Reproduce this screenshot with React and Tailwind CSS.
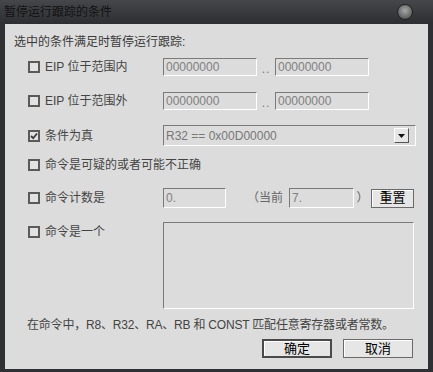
import React from 'react';

const font = { fontFamily: '"Liberation Sans", "Noto Sans CJK SC", sans-serif' };

function Check({ checked }) {
  return (
    <span className="w-[12px] h-[12px] border-2 border-[#5a5a5a] bg-[#e2e2e2] flex items-center justify-center shrink-0">
      {checked && (
        <svg width="8" height="8" viewBox="0 0 8 8">
          <path d="M1 4 L3.2 6.2 L7 1.5" stroke="#3a3a3a" strokeWidth="1.8" fill="none" />
        </svg>
      )}
    </span>
  );
}

function Field({ w, h = 18, children }) {
  return (
    <div
      className={`${w} border border-t-[#7a7a7a] border-l-[#7a7a7a] border-b-white border-r-white bg-[#dcdcdc] text-[12px] text-[#808080] pl-[2px] flex items-center shrink-0`}
      style={{ height: h }}
    >
      {children}
    </div>
  );
}

function Btn({ w, primary, children }) {
  return (
    <div className={`${w} h-[19px] ${primary ? 'border-2 border-[#4a4a4a]' : 'border border-[#6a6a6a]'} bg-[#e6e6e6] flex items-center justify-center text-[13px] text-black shadow-[inset_1px_1px_0_#ffffff]`}>
      {children}
    </div>
  );
}

function Row({ checked, label, children, className = '' }) {
  return (
    <div className={`flex items-center ${className}`}>
      <div className="w-[158px] flex items-center pl-[23px] gap-[5px] text-[12px] text-[#444]">
        <Check checked={checked} />
        <span className="whitespace-nowrap leading-[18px]">{label}</span>
      </div>
      {children}
    </div>
  );
}

function Dots() {
  return <span className="w-[18px] text-center text-[12px] text-[#777] self-end leading-[14px] tracking-[1px]">..</span>;
}

export default function App() {
  return (
    <div className="w-[433px] h-[372px] bg-[#2e3033] flex flex-col overflow-hidden" style={font}>
      <div className="h-[24px] bg-gradient-to-b from-[#45474a] to-[#2c2e31] flex items-center justify-between pl-[4px] pr-[20px]">
        <span className="text-[12px] text-[#121212] leading-none">暂停运行跟踪的条件</span>
        <span className="w-[16px] h-[16px] rounded-full border border-[#222] bg-[radial-gradient(circle_at_50%_40%,#a8a8a8,#6a6a6a_60%,#3a3a3a)]" />
      </div>
      <div className="mx-[5px] mb-[3px] flex-1 bg-[#dcdcdc] flex flex-col">
        <div className="pl-[9px] mt-[9px] h-[18px] leading-[18px] text-[12px] text-[#3a3a3a]">选中的条件满足时暂停运行跟踪:</div>

        <Row label="EIP 位于范围内" className="mt-[7px] h-[18px]">
          <Field w="w-[94px]">00000000</Field>
          <Dots />
          <Field w="w-[94px]">00000000</Field>
        </Row>

        <Row label="EIP 位于范围外" className="mt-[16px] h-[18px]">
          <Field w="w-[94px]">00000000</Field>
          <Dots />
          <Field w="w-[94px]">00000000</Field>
        </Row>

        <Row checked label="条件为真" className="mt-[15px] h-[21px]">
          <div className="w-[253px] h-[21px] border border-t-[#7a7a7a] border-l-[#7a7a7a] border-b-white border-r-white bg-[#dcdcdc] flex items-center justify-between pl-[2px] pr-[6px]">
            <span className="text-[12px] text-[#777]">R32 == 0x00D00000</span>
            <span className="w-[15px] h-[15px] bg-[#e6e6e6] border border-t-white border-l-white border-b-[#555] border-r-[#555] flex items-center justify-center">
              <svg width="7" height="4" viewBox="0 0 7 4"><path d="M0 0 H7 L3.5 4 Z" fill="#111" /></svg>
            </span>
          </div>
        </Row>

        <Row label="命令是可疑的或者可能不正确" className="mt-[10px] h-[18px]" />

        <Row label="命令计数是" className="mt-[14px] h-[20px]">
          <Field w="w-[63px]" h={20}>0.</Field>
          <span className="ml-[21px] w-[42px] text-[12px] text-[#666] whitespace-nowrap">（当前</span>
          <Field w="w-[65px]" h={20}>7.</Field>
          <span className="w-[17px] text-center text-[12px] text-[#666]">）</span>
          <Btn w="w-[43px]">重置</Btn>
        </Row>

        <div className="flex items-start mt-[14px]">
          <div className="w-[158px] h-[18px] flex items-center pl-[23px] gap-[5px] text-[12px] text-[#444] mt-[1px]">
            <Check />
            <span className="leading-[18px]">命令是一个</span>
          </div>
          <div className="w-[251px] h-[87px] border border-t-[#7a7a7a] border-l-[#7a7a7a] border-b-white border-r-white bg-[#dcdcdc]" />
        </div>

        <div className="pl-[22px] mt-[7px] h-[18px] leading-[18px] text-[12px] text-[#444] whitespace-nowrap tracking-[-0.2px]">
          在命令中，R8、R32、RA、RB 和 CONST 匹配任意寄存器或者常数。
        </div>

        <div className="flex justify-end gap-[11px] pr-[15px] mt-[5px]">
          <Btn w="w-[70px]" primary>确定</Btn>
          <Btn w="w-[70px]">取消</Btn>
        </div>
      </div>
    </div>
  );
}
